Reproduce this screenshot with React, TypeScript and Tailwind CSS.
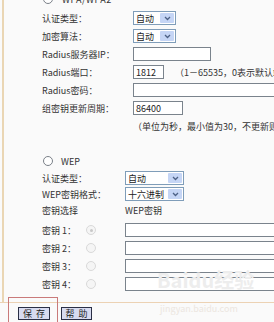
import type { ReactNode } from 'react'

const font = { fontFamily: '"Noto Sans CJK SC", "Noto Sans", sans-serif' }

function Select({ value, width }: { value: string; width: string }) {
  return (
    <div className={`h-[14px] ${width} flex items-stretch border border-[#7f9db9] bg-white`}>
      <span className="flex-1 flex items-center pl-[2px] leading-none whitespace-nowrap overflow-hidden text-[#222]">
        {value}
      </span>
      <span className="w-[14px] shrink-0 m-[1px] flex items-center justify-center bg-[#c5d5f5] rounded-[1px]">
        <svg width="7" height="5" viewBox="0 0 7 5">
          <path d="M1 1 L3.5 3.5 L6 1" fill="none" stroke="#4d6185" strokeWidth="1.3" />
        </svg>
      </span>
    </div>
  )
}

function Input({ value, width }: { value?: string; width: string }) {
  return (
    <div
      className={`h-[14px] ${width} shrink-0 flex items-center pl-[2px] border border-[#7a838c] bg-white leading-none text-[#222]`}
    >
      {value}
    </div>
  )
}

function Row({ label, children }: { label: string; children?: ReactNode }) {
  return (
    <div className="h-[18px] flex items-center">
      <span className="w-[91px] shrink-0 whitespace-nowrap">{label}</span>
      <div className="flex items-center whitespace-nowrap">{children}</div>
    </div>
  )
}

function Radio({ checked, faded }: { checked?: boolean; faded?: boolean }) {
  return (
    <span
      className={`w-[10px] h-[10px] rounded-full border flex items-center justify-center ${
        faded ? 'border-[#d9d9d9] bg-[#f5f5f5]' : 'border-[#7a8088] bg-white'
      }`}
    >
      {checked && <span className="w-[3px] h-[3px] rounded-full bg-[#c8c8c8]" />}
    </span>
  )
}

export default function App() {
  return (
    <div
      className="w-[274px] h-[322px] overflow-hidden relative bg-[#fafafa] text-[9px] leading-none text-[#333]"
      style={font}
    >
      <div className="ml-[2px] h-[302px] border-l-2 border-[#ead6b4] pl-[38px] pt-[9px]">
        {/* WPA/WPA2 */}
        <div className="h-[12px] -mt-[16px] mb-[4px] flex items-center gap-[9px] pl-[1px]">
          <Radio />
          <span className="tracking-[0.5px]">WPA/WPA2</span>
        </div>
        <Row label="认证类型：">
          <Select value="自动" width="w-[43px]" />
        </Row>
        <Row label="加密算法：">
          <Select value="自动" width="w-[43px]" />
        </Row>
        <Row label="Radius服务器IP：">
          <Input width="w-[78px]" />
        </Row>
        <Row label="Radius端口：">
          <Input value="1812" width="w-[31px]" />
          <span className="ml-[11px]">（1－65535，0表示默认端口）</span>
        </Row>
        <Row label="Radius密码：">
          <Input width="w-[160px]" />
        </Row>
        <Row label="组密钥更新周期：">
          <Input value="86400" width="w-[50px]" />
        </Row>
        <div className="h-[18px] flex items-center pl-[91px] whitespace-nowrap">
          （单位为秒，最小值为30，不更新则为0）
        </div>

        {/* WEP */}
        <div className="h-[18px] mt-[17px] flex items-center gap-[8px] pl-[1px]">
          <Radio />
          <span>WEP</span>
        </div>
        <div className="h-[16px] flex items-center">
          <span className="w-[83px] shrink-0">认证类型：</span>
          <Select value="自动" width="w-[59px]" />
        </div>
        <div className="h-[16px] flex items-center">
          <span className="w-[83px] shrink-0 whitespace-nowrap">WEP密钥格式：</span>
          <Select value="十六进制" width="w-[59px]" />
        </div>
        <div className="h-[16px] flex items-center">
          <span className="w-[83px] shrink-0">密钥选择</span>
          <span>WEP密钥</span>
        </div>
        <div className="mt-[3px]">
          {[1, 2, 3, 4].map((n) => (
            <div key={n} className="h-[18px] flex items-center">
              <span className="w-[43px] shrink-0 whitespace-nowrap">密钥 {n}：</span>
              <span className="w-[40px] shrink-0 pl-[1px]">
                <Radio checked={n === 1} faded />
              </span>
              <Input width="w-[160px]" />
            </div>
          ))}
        </div>
      </div>

      {/* footer */}
      <div className="border-t border-[#ecd2b4] flex items-center gap-[11px] pl-[18px] pt-[4px]">
        <button className="h-[13px] w-[32px] flex items-center justify-center whitespace-nowrap border border-[#2a2f45] bg-[#d7dbf0] text-[9px] text-[#222]">
          保&nbsp;&nbsp;存
        </button>
        <button className="h-[13px] w-[31px] flex items-center justify-center whitespace-nowrap border border-[#2a2f45] bg-[#d7dbf0] text-[9px] text-[#222]">
          帮&nbsp;&nbsp;助
        </button>
      </div>

      {/* annotation box */}
      <div className="absolute left-[8px] top-[297px] w-[50px] h-[30px] border border-[#c97a7a]" />

      {/* watermark */}
      <div className="absolute left-[157px] top-[270px] text-[20px] font-bold text-[#ededed] leading-none pointer-events-none">
        Baidu经验
      </div>
      <div className="absolute left-[160px] top-[304px] text-[9px] text-[#ece6e0] leading-none pointer-events-none">
        jingyan.baidu.com
      </div>
    </div>
  )
}
